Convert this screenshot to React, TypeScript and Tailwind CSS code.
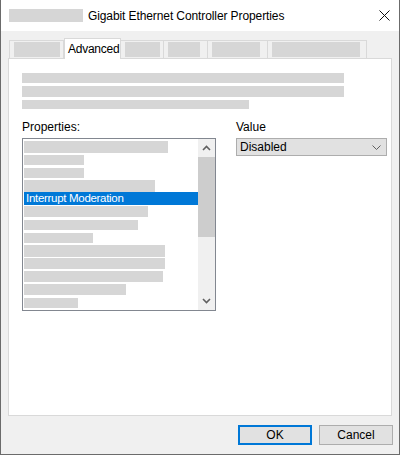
import { ReactNode } from "react";

const font = { fontFamily: '"Liberation Sans", Arial, sans-serif' };

function Block({ w, h }: { w: number; h: number }) {
  return <div className="bg-[#d6d6d6]" style={{ width: w, height: h }} />;
}

function Tab({ children, active, w }: { children: ReactNode; active?: boolean; w: number }) {
  if (active) {
    return (
      <div
        style={{ width: w }}
        className="relative z-10 -mb-px flex h-[21px] items-start border-x border-t border-[#d9d9d9] bg-white pt-[3px] pl-[3px] text-[12px] leading-[14px] tracking-[-0.25px] text-black"
      >
        {children}
      </div>
    );
  }
  return (
    <div
      style={{ width: w }}
      className="flex h-[18px] items-start border-t border-r border-[#d9d9d9] bg-[#f0f0f0] pt-[1px] pl-[4px] first:border-l"
    >
      {children}
    </div>
  );
}

const rows: { w: number; h: number }[] = [
  { w: 144, h: 12 },
  { w: 60, h: 10 },
  { w: 60, h: 10 },
  { w: 131, h: 12 },
  { w: 0, h: 0 },
  { w: 124, h: 11 },
  { w: 114, h: 10 },
  { w: 69, h: 10 },
  { w: 141, h: 12 },
  { w: 141, h: 11 },
  { w: 139, h: 11 },
  { w: 102, h: 11 },
  { w: 54, h: 10 },
];

function Chevron({ up }: { up?: boolean }) {
  return (
    <svg width="9" height="6" viewBox="0 0 9 6" className="text-[#606060]">
      <path
        d={up ? "M1 5 L4.5 1.5 L8 5" : "M1 1 L4.5 4.5 L8 1"}
        fill="none"
        stroke="currentColor"
        strokeWidth="1.6"
      />
    </svg>
  );
}

function ListBox() {
  return (
    <div className="flex h-[173px] w-[194px] border border-[#828790] bg-white">
      <div className="flex flex-1 flex-col pt-[1px] pl-[1px]">
        {rows.map((r, i) =>
          i === 4 ? (
            <div
              key={i}
              className="flex h-[13px] items-center bg-[#0078d7] pl-[2px] text-[11.5px] leading-[13px] tracking-[-0.3px] text-white"
            >
              Interrupt Moderation
            </div>
          ) : (
            <div key={i} className="flex h-[13px] items-center">
              <Block w={r.w} h={r.h} />
            </div>
          ),
        )}
      </div>
      <div className="flex w-[17px] flex-col bg-[#f0f0f0]">
        <div className="flex h-[18px] items-center justify-center">
          <Chevron up />
        </div>
        <div className="h-[80px] bg-[#cdcdcd]" />
        <div className="flex-1" />
        <div className="flex h-[18px] items-center justify-center">
          <Chevron />
        </div>
      </div>
    </div>
  );
}

export default function App() {
  return (
    <div
      style={font}
      className="flex h-[455px] w-[400px] flex-col border-x border-b border-[#6b6b6b] bg-[#f0f0f0] text-black"
    >
      {/* Title bar */}
      <div className="flex h-[31px] items-center bg-white pr-[9px] pl-[8px]">
        <Block w={74} h={13} />
        <span className="ml-[5px] text-[12px] tracking-[-0.1px]">
          Gigabit Ethernet Controller Properties
        </span>
        <svg width="11" height="11" viewBox="0 0 11 11" className="ml-auto">
          <path d="M0.5 0.5 L10.5 10.5 M10.5 0.5 L0.5 10.5" stroke="#111" strokeWidth="1" />
        </svg>
      </div>

      {/* Tabs */}
      <div className="mt-[7px] flex items-end pl-[8px]">
        <Tab w={55}>
          <Block w={46} h={15} />
        </Tab>
        <Tab w={57} active>
          Advanced
        </Tab>
        <Tab w={43}>
          <Block w={35} h={15} />
        </Tab>
        <Tab w={44}>
          <Block w={32} h={15} />
        </Tab>
        <Tab w={60}>
          <Block w={48} h={15} />
        </Tab>
        <Tab w={99}>
          <Block w={88} h={15} />
        </Tab>
      </div>

      {/* Panel */}
      <div className="mx-[7px] h-[358px] border border-[#d9d9d9] bg-white pt-[14px] pl-[13px]">
        <div className="flex flex-col gap-[3px]">
          <Block w={322} h={10} />
          <Block w={322} h={11} />
          <Block w={227} h={9} />
        </div>
        <div className="mt-[11px] flex gap-[20px]">
          <div className="flex flex-col gap-[2px]">
            <div className="h-[16px] text-[12px] leading-[15px]">Properties:</div>
            <ListBox />
          </div>
          <div className="flex flex-col gap-[2px]">
            <div className="h-[16px] text-[12px] leading-[15px]">Value</div>
            <div className="flex h-[18px] w-[151px] items-center border border-[#adadad] bg-[#e1e1e1] pr-[5px] pl-[3px] text-[12px]">
              <span>Disabled</span>
              <svg width="9" height="5" viewBox="0 0 9 5" className="ml-auto">
                <path d="M0.5 0.5 L4.5 4.5 L8.5 0.5" fill="none" stroke="#606060" strokeWidth="1" />
              </svg>
            </div>
          </div>
        </div>
      </div>

      {/* Buttons */}
      <div className="mt-[9px] flex justify-end gap-[7px] pr-[6px]">
        <button className="h-[20px] w-[74px] border-2 border-[#0078d7] bg-[#e1e1e1] text-[12px] leading-[16px]">
          OK
        </button>
        <button className="h-[20px] w-[74px] border border-[#adadad] bg-[#e1e1e1] text-[12px] leading-[18px]">
          Cancel
        </button>
      </div>
    </div>
  );
}
